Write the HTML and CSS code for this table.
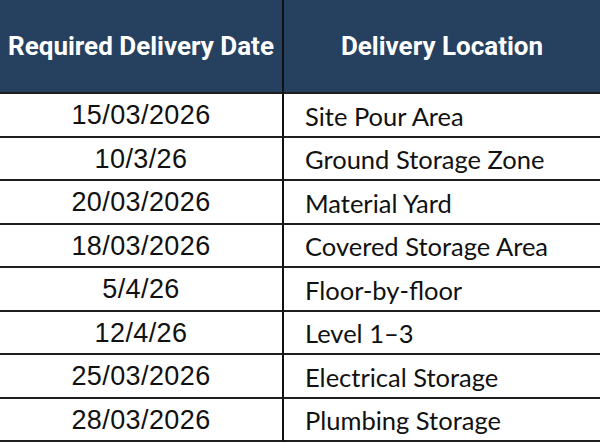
FILE: index.html
```html
<!DOCTYPE html>
<html>
<head>
<meta charset="utf-8">
<link rel="stylesheet" href="styles.css">
</head>
<body>
<div class="table">
  <div class="cell head date">Required Delivery Date</div>
  <div class="cell head loc">Delivery Location</div>

  <div class="cell date">15/03/2026</div>
  <div class="cell loc">Site Pour Area</div>

  <div class="cell date">10/3/26</div>
  <div class="cell loc">Ground Storage Zone</div>

  <div class="cell date">20/03/2026</div>
  <div class="cell loc">Material Yard</div>

  <div class="cell date">18/03/2026</div>
  <div class="cell loc">Covered Storage Area</div>

  <div class="cell date">5/4/26</div>
  <div class="cell loc">Floor-by-floor</div>

  <div class="cell date">12/4/26</div>
  <div class="cell loc">Level 1–3</div>

  <div class="cell date">25/03/2026</div>
  <div class="cell loc">Electrical Storage</div>

  <div class="cell date">28/03/2026</div>
  <div class="cell loc">Plumbing Storage</div>
</div>
</body>
</html>
```

FILE: styles.css
```css
html, body {
  margin: 0;
  padding: 0;
  background: #ffffff;
}

.table {
  display: grid;
  grid-template-columns: 284px 316px;
  grid-template-rows: 94px repeat(8, 43.5px);
  width: 600px;
}

.cell {
  box-sizing: border-box;
  border-bottom: 2px solid #1e1e1e;
  display: flex;
  align-items: center;
  color: #111111;
  padding-top: 2px;
}

.cell.date {
  border-right: 2px solid #111111;
  justify-content: center;
  font-family: "Liberation Sans", Arial, sans-serif;
  font-size: 27px;
  letter-spacing: 0.4px;
}

.cell.loc {
  padding-left: 21px;
  font-family: "Lato", "Noto Sans", sans-serif;
  font-size: 25.5px;
}

.cell.head {
  background: #264160;
  color: #ffffff;
  font-family: "Roboto", "Liberation Sans", sans-serif;
  font-weight: bold;
  font-size: 26px;
  letter-spacing: 0;
  justify-content: center;
  padding-left: 0;
  padding-top: 0;
}
```
